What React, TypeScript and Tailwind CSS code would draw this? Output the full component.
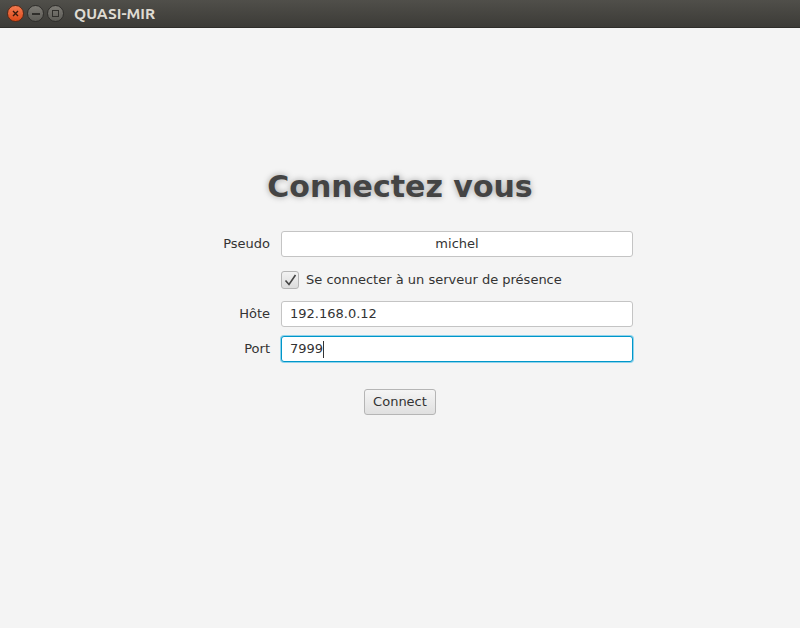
import React from 'react';

const font = { fontFamily: '"DejaVu Sans", Verdana, sans-serif' };

const TitleBar: React.FC = () => (
  <div className="h-[28px] flex items-center bg-gradient-to-b from-[#504f4a] to-[#3c3b37] border-b border-[#2e2d2a]">
    <div className="flex items-center gap-[3px] pl-[7px]">
      <div className="w-[17px] h-[17px] rounded-full bg-gradient-to-b from-[#f37a4f] to-[#dd4814] border border-[#5a2a17] flex items-center justify-center">
        <svg width="7" height="7" viewBox="0 0 7 7">
          <path d="M1 1L6 6M6 1L1 6" stroke="#3a1a0c" strokeWidth="1.4" />
        </svg>
      </div>
      <div className="w-[17px] h-[17px] rounded-full bg-gradient-to-b from-[#7d7b75] to-[#5c5b56] border border-[#2f2e2b] flex items-center justify-center">
        <div className="w-[8px] h-[2px] bg-[#2f2e2b]" />
      </div>
      <div className="w-[17px] h-[17px] rounded-full bg-gradient-to-b from-[#7d7b75] to-[#5c5b56] border border-[#2f2e2b] flex items-center justify-center">
        <div className="w-[7px] h-[7px] border-[1.5px] border-[#2f2e2b]" />
      </div>
    </div>
    <span className="ml-[10px] text-[15.5px] font-bold text-[#dfdbd2]" style={{ fontFamily: 'Ubuntu, "DejaVu Sans", sans-serif' }}>
      QUASI-MIR
    </span>
  </div>
);

const Field: React.FC<{ label: string; value: string; center?: boolean; focused?: boolean }> = ({ label, value, center, focused }) => (
  <div className="flex items-center">
    <div className="w-[60px] text-right text-[13px] text-[#333]">{label}</div>
    <div
      className={
        'ml-[11px] w-[352px] h-[26px] rounded-[3px] bg-white flex items-center px-[8px] text-[13px] text-[#333] ' +
        (focused ? 'border border-[#0096c9] shadow-[0_0_0_1px_#8fd3ec]' : 'border border-[#c4c4c4]') +
        (center ? ' justify-center' : '')
      }
    >
      {value}
      {focused && <span className="w-px h-[17px] bg-[#333]" />}
    </div>
  </div>
);

export default function App() {
  return (
    <div className="w-[800px] h-[628px] bg-[#f4f4f4] flex flex-col" style={font}>
      <TitleBar />
      <div className="flex flex-col">
        <h1
          className="mt-[140px] text-center text-[30px] font-bold text-[#444] leading-[38px]"
          style={{ textShadow: '0 0 6px rgba(0,0,0,0.35)' }}
        >
          Connectez vous
        </h1>
        <div className="ml-[210px] mt-[25px] flex flex-col">
          <Field label="Pseudo" value="michel" center />
          <div className="ml-[71px] mt-[14px] flex items-center h-[18px]">
            <div className="w-[18px] h-[18px] rounded-[3px] border border-[#b5b5b5] bg-gradient-to-b from-[#f2f2f2] to-[#dcdcdc] flex items-center justify-center">
              <svg width="13" height="12" viewBox="0 0 13 12">
                <path d="M1.5 6.5L5 10.5L11.5 1" fill="none" stroke="#444" strokeWidth="1.6" />
              </svg>
            </div>
            <span className="ml-[7px] text-[13px] text-[#333]">Se connecter à un serveur de présence</span>
          </div>
          <div className="mt-[12px]">
            <Field label="Hôte" value="192.168.0.12" />
          </div>
          <div className="mt-[9px]">
            <Field label="Port" value="7999" focused />
          </div>
        </div>
        <div className="mt-[27px] flex justify-center">
          <button className="w-[72px] h-[26px] rounded-[3px] border border-[#b5b5b5] bg-gradient-to-b from-[#f5f5f5] to-[#e0e0e0] text-[13px] text-[#333]">
            Connect
          </button>
        </div>
      </div>
    </div>
  );
}
